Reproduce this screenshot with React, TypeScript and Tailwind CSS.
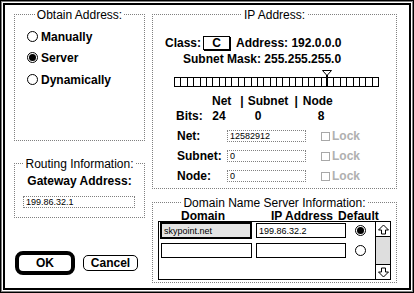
import type { ReactNode } from "react";

const font = "font-['Liberation_Sans',Arial,sans-serif]";

function Group({ title, className, children }: { title: string; className?: string; children?: ReactNode }) {
  return (
    <div className={`relative border border-dotted border-[#808080] ${className ?? ""}`}>
      <div className="absolute -top-[5px] left-0 right-0 flex justify-center">
        <span className="bg-white px-[2px] text-[12px] leading-[11px]">{title}</span>
      </div>
      {children}
    </div>
  );
}

function Radio({ on }: { on?: boolean }) {
  return (
    <span className="flex h-[11px] w-[11px] shrink-0 items-center justify-center rounded-full border border-black bg-white">
      {on && <span className="h-[7px] w-[7px] rounded-full bg-black" />}
    </span>
  );
}

function Field({ value, className }: { value?: string; className?: string }) {
  return (
    <div
      className={`flex h-[12px] items-center border border-dotted border-[#808080] pl-[2px] text-[9px] leading-[10px] ${className ?? ""}`}
    >
      {value}
    </div>
  );
}

function LockRow({ label, value }: { label: string; value: string }) {
  return (
    <div className="ml-[24px] flex h-[12px] items-center">
      <span className="w-[50px] font-bold">{label}</span>
      <Field value={value} className="w-[79px]" />
      <span className="ml-[15px] h-[9px] w-[9px] border border-[#a8a8a8]" />
      <span className="ml-[2px] font-bold text-[#b0b0b0]">Lock</span>
    </div>
  );
}

function SubnetSlider() {
  const cells = Array.from({ length: 33 }, (_, i) => Math.round((i * 204) / 32) + 0.5);
  return (
    <svg width="206" height="17" className="ml-[21px] mt-[5px] block">
      <rect x="0.5" y="7.5" width="204" height="9" fill="white" stroke="black" />
      {cells.map((x, i) => (
        <line key={i} x1={x} y1="7.5" x2={x} y2="16.5" stroke="black" />
      ))}
      <path d="M148.5 0.5 H157.5 L153 5.5 Z" fill="white" stroke="black" />
      <rect x="152" y="5" width="2" height="12" fill="black" />
    </svg>
  );
}

function Arrow({ down }: { down?: boolean }) {
  return (
    <svg width="11" height="11" viewBox="0 0 11 11" className={down ? "rotate-180" : ""}>
      <path d="M5.5 1 L10.5 6 H7.5 V10 H3.5 V6 H0.5 Z" fill="white" stroke="black" strokeLinejoin="miter" />
    </svg>
  );
}

export default function App() {
  return (
    <div className={`h-[293px] w-[414px] bg-white text-[12px] leading-[12px] text-black ${font}`}>
      <div className="h-full border border-black">
        <div className="h-full border border-[#808080]">
          <div className="h-full border border-white">
            <div className="flex h-full border-2 border-black pl-[9px] pt-[9px]">
              {/* left column */}
              <div className="flex w-[131px] flex-col">
                <Group title="Obtain Address:" className="h-[127px]">
                  <div className="flex flex-col pl-[12px] pt-[16px] font-bold">
                    <div className="flex h-[11px] items-center gap-[3px]">
                      <Radio />
                      <span>Manually</span>
                    </div>
                    <div className="mt-[10px] flex h-[11px] items-center gap-[3px]">
                      <Radio on />
                      <span>Server</span>
                    </div>
                    <div className="mt-[11px] flex h-[11px] items-center gap-[3px]">
                      <Radio />
                      <span>Dynamically</span>
                    </div>
                  </div>
                </Group>

                <Group title="Routing Information:" className="mt-[22px] h-[55px]">
                  <div className="mt-[11px] text-center font-bold">Gateway Address:</div>
                  <Field value="199.86.32.1" className="ml-[8px] mt-[9px] w-[112px]" />
                </Group>

                <div className="mt-[33px] flex items-center">
                  <div className="ml-px flex h-[24px] w-[60px] items-center justify-center rounded-[8px] border-[4px] border-black font-bold">
                    OK
                  </div>
                  <div className="ml-[8px] flex h-[16px] w-[55px] items-center justify-center rounded-[5px] border border-black font-bold">
                    Cancel
                  </div>
                </div>
              </div>

              {/* right column */}
              <div className="ml-[7px] flex w-[245px] flex-col">
                <Group title="IP Address:" className="h-[175px]">
                  <div className="ml-[12px] mt-[21px] flex h-[14px] items-center font-bold">
                    <span>Class:</span>
                    <span className="ml-[2px] flex h-[14px] w-[27px] items-center justify-center border border-black shadow-[1px_1px_0_#000]">
                      C
                    </span>
                    <span className="ml-[6px]">Address: 192.0.0.0</span>
                  </div>
                  <div className="ml-[30px] mt-[3px] font-bold">Subnet Mask: 255.255.255.0</div>
                  <SubnetSlider />
                  <div className="ml-[59px] mt-[8px] flex font-bold">
                    <span>Net</span>
                    <span className="ml-[9px]">|</span>
                    <span className="ml-[4px]">Subnet</span>
                    <span className="ml-[6px]">|</span>
                    <span className="ml-[5px]">Node</span>
                  </div>
                  <div className="ml-[23px] mt-[3px] flex font-bold">
                    <span className="w-[29px]">Bits:</span>
                    <span className="w-[28px] text-center">24</span>
                    <span className="w-[50px] text-center">0</span>
                    <span className="w-[76px] text-center">8</span>
                  </div>
                  <div className="mt-[8px] flex flex-col gap-[8px]">
                    <LockRow label="Net:" value="12582912" />
                    <LockRow label="Subnet:" value="0" />
                    <LockRow label="Node:" value="0" />
                  </div>
                </Group>

                <Group title="Domain Name Server Information:" className="mt-[13px] h-[81px]">
                  <div className="ml-[28px] mt-[8px] flex h-[10px] items-center font-bold leading-[10px]">
                    <span>Domain</span>
                    <span className="ml-[46px]">IP Address</span>
                    <span className="ml-[5px]">Default</span>
                  </div>
                  <div className="ml-[5px] flex h-[59px] w-[233px] border border-black">
                    <div className="flex flex-1 flex-col text-[9px] leading-[10px]">
                      <div className="flex h-[17px] items-center">
                        <div className="ml-px flex h-[17px] w-[92px] items-center border-2 border-black bg-[#e4e4e4] pl-[2px]">
                          skypoint.net
                        </div>
                        <div className="ml-[4px] flex h-[15px] w-[90px] items-center border border-black pl-[2px]">
                          199.86.32.2
                        </div>
                        <span className="ml-[9px]">
                          <Radio on />
                        </span>
                      </div>
                      <div className="mt-[4px] flex h-[15px] items-center">
                        <div className="ml-[2px] h-[15px] w-[91px] border border-black" />
                        <div className="ml-[4px] h-[15px] w-[90px] border border-black" />
                        <span className="ml-[9px]">
                          <Radio />
                        </span>
                      </div>
                    </div>
                    <div className="flex w-[15px] flex-col border-l border-black bg-[#dedede]">
                      <div className="flex h-[15px] items-center justify-center border-b border-black bg-white">
                        <Arrow />
                      </div>
                      <div className="flex-1" />
                      <div className="flex h-[15px] items-center justify-center border-t border-black bg-white">
                        <Arrow down />
                      </div>
                    </div>
                  </div>
                </Group>
              </div>
            </div>
          </div>
        </div>
      </div>
    </div>
  );
}
